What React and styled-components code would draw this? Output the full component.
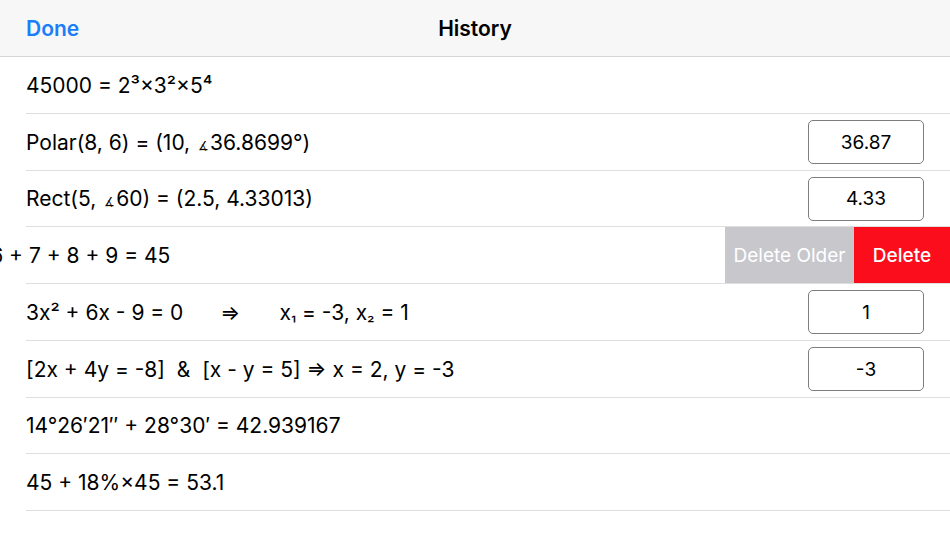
import React from "react"
import styled, { createGlobalStyle } from "styled-components"

const Global = createGlobalStyle`
    html, body {
        margin: 0;
        padding: 0;
        background: #ffffff;
        font-family: Inter, "Liberation Sans", sans-serif;
        color: #000;
    }
`

const Page = styled.div`
    width: 950px;
    height: 534px;
    overflow: hidden;
    background: #fff;
`

const NavBar = styled.header`
    height: 56px;
    display: grid;
    grid-template-columns: 1fr auto 1fr;
    align-items: center;
    padding: 0 26px;
    background: #f7f7f7;
    border-bottom: 1px solid #d6d6d6;
`

const DoneButton = styled.span`
    color: #1a7ef9;
    font-size: 21px;
    font-weight: 600;
`

const Title = styled.h1`
    margin: 0;
    font-size: 21px;
    font-weight: 600;
    color: #000;
`

const List = styled.ul`
    list-style: none;
    margin: 0;
    padding: 0;
`

const Row = styled.li`
    height: 56.75px;
    display: flex;
    align-items: center;
    overflow: hidden;
    background: linear-gradient(#dedede, #dedede) no-repeat 26px 100% / calc(100% - 26px) 1px;
`

const Content = styled.div`
    flex: none;
    width: 950px;
    height: 100%;
    box-sizing: border-box;
    padding: 0 26px;
    display: flex;
    align-items: center;
    justify-content: space-between;
    margin-left: ${p => p.$offset ? -p.$offset : 0}px;
`

const Expr = styled.span`
    font-size: 21px;
    white-space: pre;
`

const Angle = styled.span`
    font-size: 12px;
    margin: 0 1px 0 2px;
`

const Gap = styled.span`
    display: inline-block;
    width: ${p => p.$w}px;
`

const Sub = styled.span`
    font-size: 17px;
`

const ValueBox = styled.div`
    width: 116px;
    height: 44px;
    box-sizing: border-box;
    border: 1px solid #7d7d7d;
    border-radius: 5px;
    display: flex;
    align-items: center;
    justify-content: center;
    font-size: 19px;
`

const Actions = styled.div`
    flex: none;
    display: flex;
    height: 56px;
    align-self: flex-start;
`

const Action = styled.div`
    height: 100%;
    display: flex;
    align-items: center;
    justify-content: center;
    width: ${p => p.$w}px;
    background: ${p => p.$bg};
    color: #fff;
    font-size: 19px;
    font-weight: ${p => p.$bold ? 500 : 400};
`

const items = [
    { text: <>45000 = 2³×3²×5⁴</> },
    { text: <>Polar(8, 6) = (10, <Angle>∡</Angle>36.8699°)</>, value: "36.87" },
    { text: <>Rect(5, <Angle>∡</Angle>60) = (2.5, 4.33013)</>, value: "4.33" },
    { text: <>1 + 2 + 3 + 4 + 5 + 6 + 7 + 8 + 9 = 45</>, swiped: true },
    { text: <>3x² + 6x - 9 = 0<Gap $w={37} />⇒<Gap $w={39} />x<Sub>₁</Sub> = -3, x<Sub>₂</Sub> = 1</>, value: "1" },
    { text: <>[2x + 4y = -8]  &amp;  [x - y = 5] ⇒ x = 2, y = -3</>, value: "-3" },
    { text: <>14°26′21″ + 28°30′ = 42.939167</> },
    { text: <>45 + 18%×45 = 53.1</> },
]

const App = () =>
    <Page>
        <Global/>
        <NavBar>
            <DoneButton>Done</DoneButton>
            <Title>History</Title>
            <span/>
        </NavBar>
        <List>
            {items.map((item, i) =>
                <Row key={i}>
                    <Content $offset={item.swiped ? 225 : 0}>
                        <Expr>{item.text}</Expr>
                        {item.value && <ValueBox>{item.value}</ValueBox>}
                    </Content>
                    {item.swiped &&
                        <Actions>
                            <Action $w={129} $bg="#c7c7cc">Delete Older</Action>
                            <Action $w={96} $bg="#fc0d1b" $bold>Delete</Action>
                        </Actions>}
                </Row>
            )}
        </List>
    </Page>

export default App
